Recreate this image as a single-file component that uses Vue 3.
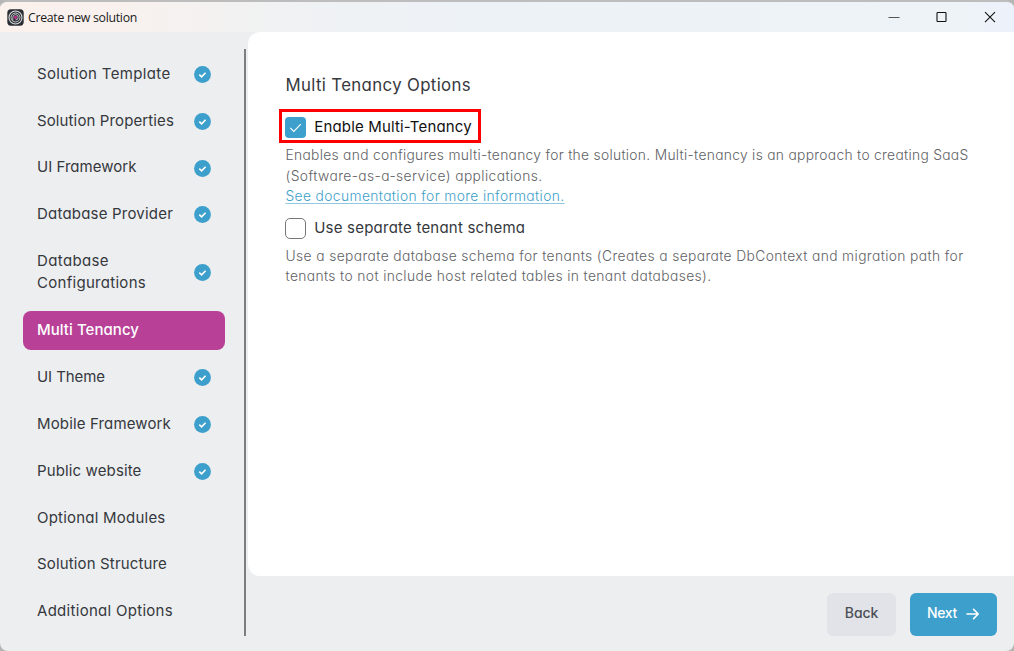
<script setup>
const steps = [
  { lines: [['Solution Template', 133.5]], done: true },
  { lines: [['Solution Properties', 137]], done: true },
  { lines: [['UI Framework', 99.5]], done: true },
  { lines: [['Database Provider', 136]], done: true },
  { lines: [['Database', 72], ['Configurations', 109]], done: true },
  { lines: [['Multi Tenancy', 102]], active: true },
  { lines: [['UI Theme', 68]], done: true },
  { lines: [['Mobile Framework', 134]], done: true },
  { lines: [['Public website', 104.5]], done: true },
  { lines: [['Optional Modules', 128.5]] },
  { lines: [['Solution Structure', 130]] },
  { lines: [['Additional Options', 136]] }
]

// Tracks a line of text out so that it spans the given width.
const vFit = {
  mounted(el, { value }) {
    const extra = value - el.getBoundingClientRect().width
    el.style.letterSpacing = `${extra / el.textContent.length}px`
  }
}
</script>

<template>
  <div class="window">
    <header class="titlebar">
      <svg class="logo" width="17" height="17" viewBox="0 0 17 17" fill="none">
        <rect x=".3" y=".3" width="16.4" height="16.4" rx="3.6" fill="#292d33" />
        <circle cx="8.5" cy="8.5" r="6.5" stroke="#d8dadd" stroke-width="1.1" />
        <circle cx="8.5" cy="8.5" r="4.5" stroke="#c6c8cc" />
        <path d="M5.8 12V8.3A2.7 2.7 0 1 1 8.5 11" stroke="#c6c8cc" stroke-width=".9" />
        <circle cx="8.5" cy="8.4" r="1.6" fill="#c22d8d" />
      </svg>
      <span v-fit="109" class="caption">Create new solution</span>
      <div class="controls">
        <svg width="12" height="12" viewBox="0 0 12 12"><path d="M.5 6.5h11" stroke="#555" /></svg>
        <svg width="12" height="12" viewBox="0 0 12 12"><rect x="1" y="1.5" width="9" height="9" rx=".8" fill="none" stroke="#111" stroke-width="1.1" /></svg>
        <svg width="12" height="12" viewBox="0 0 12 12"><path d="M1 1.2l10 10M11 1.2l-10 10" stroke="#111" stroke-width="1.1" /></svg>
      </div>
    </header>

    <div class="body">
      <nav class="sidebar">
        <div v-for="step in steps" :key="step.lines[0][0]" class="step" :class="{ active: step.active }">
          <div class="label">
            <div v-for="line in step.lines" :key="line[0]"><span v-fit="line[1]">{{ line[0] }}</span></div>
          </div>
          <svg v-if="step.done" class="check" width="17" height="17" viewBox="0 0 17 17">
            <circle cx="8.5" cy="8.5" r="8.4" fill="#3d9fcb" />
            <path d="M5.3 8.6l2.3 2.2 4-4.1" fill="none" stroke="#fff" stroke-width="1.6" />
          </svg>
        </div>
      </nav>

      <div class="main">
        <section class="panel">
          <h1><span v-fit="185.5">Multi Tenancy Options</span></h1>
          <div class="option highlighted">
            <span class="box checked">
              <svg width="21" height="21" viewBox="0 0 21 21"><path d="M5.3 10.9l3.5 3.5 7-7.2" fill="none" stroke="#fff" stroke-width="1.1" /></svg>
            </span>
            <span v-fit="157.5" class="option-label">Enable Multi-Tenancy</span>
          </div>
          <div class="description">
            <div><span v-fit="683">Enables and configures multi-tenancy for the solution. Multi-tenancy is an approach to creating SaaS</span></div>
            <div><span v-fit="257">(Software-as-a-service) applications.</span></div>
            <div><a v-fit="279">See documentation for more information.</a></div>
          </div>
          <div class="option second">
            <span class="box"></span>
            <span v-fit="211" class="option-label">Use separate tenant schema</span>
          </div>
          <div class="description last">
            <div><span v-fit="678">Use a separate database schema for tenants (Creates a separate DbContext and migration path for</span></div>
            <div><span v-fit="426">tenants to not include host related tables in tenant databases).</span></div>
          </div>
        </section>

        <footer class="actions">
          <button class="back"><span v-fit="33.5">Back</span></button>
          <button class="next">
            <span v-fit="30">Next</span>
            <svg width="14" height="12" viewBox="0 0 14 12"><path d="M1 6h11M7.6 1.4L12.2 6l-4.6 4.6" fill="none" stroke="#fff" stroke-width="1.6" stroke-linecap="round" stroke-linejoin="round" /></svg>
          </button>
        </footer>
      </div>
    </div>
  </div>
</template>

<style>
body {
  background: #b5b5b5;
}
</style>

<style scoped>
.window {
  box-sizing: border-box;
  width: 1014px;
  height: 651px;
  display: flex;
  flex-direction: column;
  overflow: hidden;
  border-top: 2px solid #bdbdbd;
  border-radius: 8px;
  background: #edeef0;
  font-family: Inter, "Liberation Sans", sans-serif;
  font-feature-settings: "cv11";
  color: #35383d;
}
.titlebar {
  height: 30px;
  flex: none;
  display: flex;
  align-items: center;
  padding: 0 18px 0 7px;
  background: linear-gradient(90deg, #fbf1ed 0, #f8f1ee 120px, #f0f2f3 280px, #edf2f7 480px, #eef3f8 960px, #edf1fb 100%);
}
.caption {
  margin-left: 4px;
  font: 12.3px "Open Sans", sans-serif;
  color: #1b1b1b;
  white-space: nowrap;
}
.controls {
  margin-left: auto;
  display: flex;
  gap: 36px;
}
.body {
  flex: 1;
  display: flex;
  min-height: 0;
}
.sidebar {
  box-sizing: border-box;
  width: 223px;
  height: 587px;
  margin: 17px 2px 0 23px;
  padding: 6px 21px 0 0;
  border-right: 2px solid #7c7f80;
  display: flex;
  flex-direction: column;
  gap: 8.3px;
}
.step {
  box-sizing: border-box;
  width: 202px;
  flex: none;
  display: flex;
  align-items: center;
  justify-content: space-between;
  padding: 7.7px 14px 8.9px;
  border-radius: 8px;
  font-size: 15px;
  line-height: 22px;
  white-space: nowrap;
}
.check {
  position: relative;
  top: .6px;
  left: .2px;
}
.active {
  background: #b84197;
  color: #fff;
  font-weight: 500;
}
.main {
  flex: 1;
  min-width: 0;
  display: flex;
  flex-direction: column;
}
.panel {
  box-sizing: border-box;
  height: 543.5px;
  padding: 40px 0 0 37.5px;
  border-radius: 12px 0 0 12px;
  background: #fff;
  white-space: nowrap;
}
h1 {
  margin: 0;
  font-size: 16.8px;
  line-height: 27px;
  font-weight: 400;
}
.option {
  display: flex;
  align-items: center;
  gap: 8px;
  font-size: 15px;
}
.option-label {
  padding-bottom: 2px;
}
.highlighted {
  box-sizing: border-box;
  width: 202px;
  height: 34px;
  margin: 10px 0 0 -6.5px;
  padding: 2px 0 0 3.3px;
  border: 3px solid #f00;
  color: #111;
}
.box {
  box-sizing: border-box;
  width: 21px;
  height: 21px;
  flex: none;
  border: 1px solid #777;
  border-radius: 5px;
}
.box.checked {
  display: flex;
  border: 0;
  border-radius: 4px;
  background: #3d9fcb;
}
.description {
  margin-top: 2.3px;
  font-size: 13.8px;
  line-height: 20.3px;
  font-weight: 300;
  color: #5f6266;
}
.description a {
  color: #3d9fcb;
  text-decoration: underline;
  text-decoration-color: #91c8e1;
  text-decoration-thickness: 1px;
  text-underline-offset: 2px;
}
.second {
  height: 21px;
  margin: 11.7px 0 0 -.3px;
}
.last {
  margin-top: 7px;
}
.actions {
  display: flex;
  justify-content: flex-end;
  gap: 14px;
  padding: 17px 17px 0 0;
}
button {
  height: 43px;
  padding: 0 0 3px;
  display: flex;
  align-items: center;
  justify-content: center;
  border: 0;
  border-radius: 6px;
  font: 500 14px Inter, sans-serif;
  font-feature-settings: "cv11";
}
.back {
  width: 69px;
  background: #e2e3e8;
  color: #4b4e55;
}
.next {
  width: 87px;
  gap: 9px;
  background: #3d9fcb;
  color: #fff;
}
.next svg {
  position: relative;
  top: 1.5px;
}
</style>
